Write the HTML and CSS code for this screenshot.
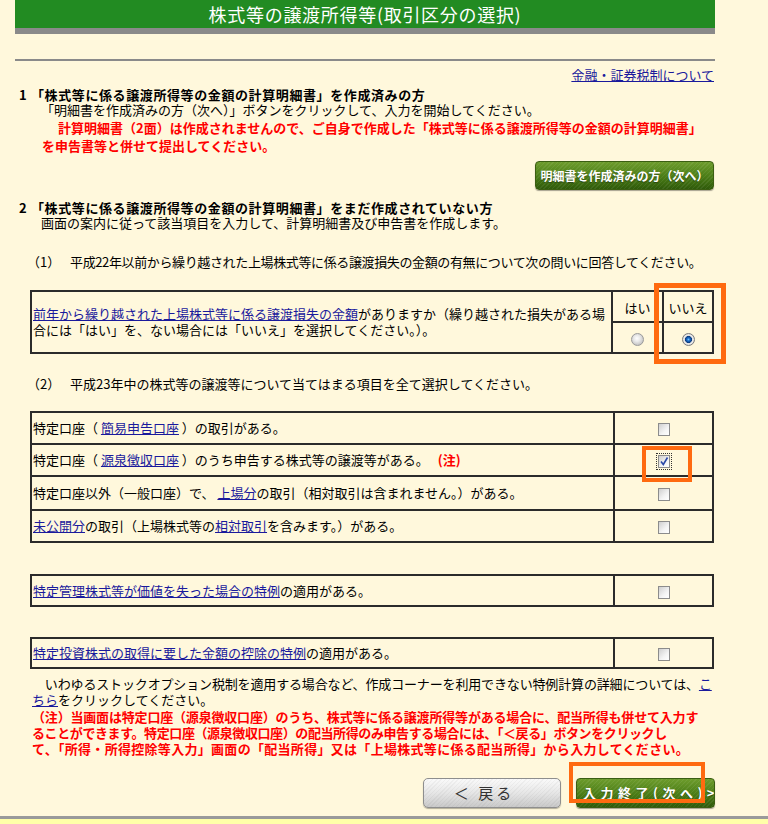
FILE: index.html
```html
<!DOCTYPE html>
<html lang="ja">
<head>
<meta charset="utf-8">
<title>株式等の譲渡所得等(取引区分の選択)</title>
<link rel="stylesheet" href="styles.css">
</head>
<body>
<div class="page">
  <div class="titlebar"><h1>株式等の譲渡所得等(取引区分の選択)</h1></div>
  <hr class="rule">
  <div class="toplink"><a href="#">金融・証券税制について</a></div>

  <h2 class="head"><span class="num">1</span>「株式等に係る譲渡所得等の金額の計算明細書」を作成済みの方</h2>
  <p class="desc">「明細書を作成済みの方（次へ）」ボタンをクリックして、入力を開始してください。</p>
  <p class="warn">計算明細書（2面）は作成されませんので、ご自身で作成した「株式等に係る譲渡所得等の金額の計算明細書」<br>を申告書等と併せて提出してください。</p>
  <div class="btnrow1"><span class="btn-green btn-sm">明細書を作成済みの方（次へ）</span></div>

  <h2 class="head head2"><span class="num">2</span>「株式等に係る譲渡所得等の金額の計算明細書」をまだ作成されていない方</h2>
  <p class="desc">画面の案内に従って該当項目を入力して、計算明細書及び申告書を作成します。</p>

  <p class="q q1"><span class="qn">（1）</span>平成22年以前から繰り越された上場株式等に係る譲渡損失の金額の有無について次の問いに回答してください。</p>
  <table class="tbl t1">
    <tr>
      <td class="txt" rowspan="2"><a href="#">前年から繰り越された上場株式等に係る譲渡損失の金額</a>がありますか（繰り越された損失がある場<br>合には「はい」を、ない場合には「いいえ」を選択してください。）。</td>
      <td class="yn c-yes">はい</td>
      <td class="yn c-no">いいえ<span class="mark mark-no"></span></td>
    </tr>
    <tr>
      <td class="rad c-yes"><span class="radio"></span></td>
      <td class="rad c-no"><span class="radio on"></span></td>
    </tr>
  </table>

  <p class="q q2"><span class="qn">（2）</span>平成23年中の株式等の譲渡等について当てはまる項目を全て選択してください。</p>
  <table class="tbl t2">
    <tr class="r1">
      <td class="txt">特定口座（ <a href="#">簡易申告口座</a> ）の取引がある。</td>
      <td class="chk"><span class="cb"></span></td>
    </tr>
    <tr class="r2">
      <td class="txt">特定口座（ <a href="#">源泉徴収口座</a> ）のうち申告する株式等の譲渡等がある。 <span class="note">(注)</span></td>
      <td class="chk"><span class="cb on"><svg viewBox="0 0 12 13" width="12" height="13"><path d="M3 6.5 L5.3 9.5 L9.5 2.5" fill="none" stroke="#2b49a8" stroke-width="1.6"/></svg><span class="mark mark-cb"></span></span></td>
    </tr>
    <tr class="r3">
      <td class="txt">特定口座以外（一般口座）で、 <a href="#">上場分</a>の取引（相対取引は含まれません。）がある。</td>
      <td class="chk"><span class="cb"></span></td>
    </tr>
    <tr class="r4">
      <td class="txt"><a href="#">未公開分</a>の取引（上場株式等の<a href="#">相対取引</a>を含みます。）がある。</td>
      <td class="chk"><span class="cb"></span></td>
    </tr>
  </table>

  <table class="tbl t3">
    <tr>
      <td class="txt"><a href="#">特定管理株式等が価値を失った場合の特例</a>の適用がある。</td>
      <td class="chk"><span class="cb"></span></td>
    </tr>
  </table>

  <table class="tbl t4">
    <tr>
      <td class="txt"><a href="#">特定投資株式の取得に要した金額の控除の特例</a>の適用がある。</td>
      <td class="chk"><span class="cb"></span></td>
    </tr>
  </table>

  <p class="info"><span class="ln ln1">　いわゆるストックオプション税制を適用する場合など、作成コーナーを利用できない特例計算の詳細については、<a href="#">こ</a></span><span class="ln"><a href="#">ちら</a>をクリックしてください。</span></p>
  <p class="caution"><span class="ln c1">（注）当画面は特定口座（源泉徴収口座）のうち、株式等に係る譲渡所得等がある場合に、配当所得も併せて入力す</span><span class="ln c2">ることができます。特定口座（源泉徴収口座）の配当所得のみ申告する場合には、「＜戻る」ボタンをクリックし</span><span class="ln c3">て、「所得・所得控除等入力」画面の「配当所得」又は「上場株式等に係る配当所得」から入力してください。</span></p>

  <div class="navrow">
    <span class="btn-gray">＜ 戻る</span>
    <span class="btn-next-wrap"><span class="btn-green btn-next">入力終了(次へ)&gt;</span><span class="mark mark-next"></span></span>
  </div>
</div>
<div class="footer"></div>
</body>
</html>
```
FILE: styles.css
```css
* { box-sizing: border-box; }
html, body { margin: 0; padding: 0; }
body {
  background: #fff8dc;
  font-family: "Noto Sans CJK JP", "Noto Sans", sans-serif;
  font-size: 13px;
  line-height: 16px;
  color: #000;
  overflow: hidden;
}
a { color: #1a1a9c; text-decoration: underline; }
p { margin: 0; }

.page { width: 700px; margin-left: 15px; }

.titlebar {
  height: 34px;
  background: #228b22;
  border-bottom: 6px solid #8a8a8a;
}
.titlebar h1 {
  margin: 0;
  font-size: 18px;
  font-weight: normal;
  letter-spacing: 0.7px;
  color: #fff;
  text-align: center;
  line-height: 28px;
}
.rule { margin: 25px 0 0; height: 2px; background: #8a8a8a; border: 0; }

.toplink { text-align: right; margin-top: 6px; padding-right: 1px; }

.head {
  margin: 4px 0 0;
  font-size: 13px;
  font-weight: bold;
  line-height: 15px;
  padding-left: 4px;
  letter-spacing: 0.6px;
  white-space: nowrap;
}
.head .num { display: inline-block; width: 12px; letter-spacing: 0; }
.head2 { margin-top: 10px; }
.desc { padding-left: 26px; line-height: 15px; }
.warn {
  margin-top: 2px;
  padding-left: 27px;
  text-indent: 16px;
  color: #ff0000;
  font-weight: bold;
  line-height: 18px;
  white-space: nowrap;
}

.btn-green {
  display: inline-block;
  color: #fff;
  font-weight: bold;
  border: 1px solid #3b5e12;
  border-radius: 4px;
  background:
    repeating-linear-gradient(135deg, rgba(255,255,255,0.07) 0 1px, rgba(255,255,255,0) 1px 3px),
    linear-gradient(#6d9c2c, #4a7c16 55%, #2f5a0a);
  box-shadow: 0 1px 1px rgba(0,0,0,0.35);
  text-shadow: 0 1px 1px rgba(0,0,0,0.4);
  white-space: nowrap;
}
.btnrow1 { margin-top: 6px; text-align: right; padding-right: 1px; height: 29px; }
.btn-sm {
  width: 179px;
  height: 29px;
  font-size: 12px;
  line-height: 27px;
  text-align: center;
}

.q { padding-left: 12px; white-space: nowrap; }
.q .qn { display: inline-block; width: 43px; letter-spacing: 0; }
.q1 { margin-top: 24px; letter-spacing: -0.37px; }
.q2 { margin-top: 22px; }

.tbl {
  margin-left: 15px;
  width: 684px;
  border: 1px solid #2b2b2b;
  border-spacing: 0;
  border-collapse: separate;
}
.tbl td {
  box-sizing: content-box;
  border: 1px solid #2b2b2b;
  padding: 0;
  vertical-align: middle;
}
.tbl td.txt { padding-left: 1px; }
.t1 { margin-top: 20px; }
.t1 td { height: 29px; }
.t1 td.txt { width: 578px; }
.t1 td.c-yes { width: 49px; text-align: center; }
.t1 td.c-no { width: 48px; text-align: center; position: relative; }
.t1 td.yn { padding-top: 2px; height: 27px; }

.t2 { margin-top: 19px; }
.t2 td.txt { width: 580px; }
.t2 td.chk { width: 97px; text-align: center; }
.t2 .r1 td { height: 30px; }
.t2 .r2 td { height: 30px; }
.t2 .r3 td { height: 32px; }
.t2 .r4 td { height: 30px; }
.t3 { margin-top: 31px; }
.t3 td { height: 29px; }
.t4 { margin-top: 30px; }
.t4 td { height: 28px; }
.t3 td.txt, .t4 td.txt { width: 580px; }
.t3 td.chk, .t4 td.chk { width: 97px; text-align: center; }

.note { color: #ff0000; font-weight: bold; margin-left: 6px; }

.radio {
  display: inline-block;
  width: 13px;
  height: 13px;
  border-radius: 50%;
  border: 1px solid #9a9a9a;
  background: radial-gradient(circle at 45% 40%, #ffffff 0, #e9e9e9 35%, #c4c4c4 75%, #b0b0b0 100%);
  vertical-align: middle;
  margin-top: 1px;
}
.radio.on {
  border-color: #7c7c7c;
  background: radial-gradient(circle at 50% 50%, #6cc0ff 0, #1a6cc8 1.5px, #0b3c80 3.2px, #d8d8d8 3.8px, #f2f2f2 4.6px, #b8b8b8 6.5px);
}

.cb {
  display: inline-block;
  position: relative;
  width: 12px;
  height: 13px;
  border: 1px solid #8c8c8c;
  background: linear-gradient(135deg, #cfcfcf 0%, #f4f4f4 60%, #ffffff 100%);
  vertical-align: middle;
  margin-top: 1px;
}
.cb svg { position: absolute; left: -1px; top: -1px; }
.cb.on { outline: 1px dotted #333; outline-offset: 1px; }

.mark {
  position: absolute;
  border: 5px solid #ff6a10;
  pointer-events: none;
}
.mark-no { left: -10px; top: -9px; width: 72px; height: 81px; }
.mark-cb { left: -17px; top: -10px; width: 50px; height: 36px; border-width: 4px; }

.info { margin-top: 7px; padding-left: 17px; }
.ln { display: block; white-space: nowrap; }
.info .ln1 { letter-spacing: -0.15px; }
.caution {
  margin-top: 1px;
  padding-left: 17px;
  color: #ff0000;
  font-weight: bold;
  line-height: 16px;
}
.caution .c1 { letter-spacing: -0.18px; }
.caution .c2 { letter-spacing: -0.4px; }
.caution .c3 { letter-spacing: 0.3px; }

.navrow {
  margin-top: 21px;
  height: 30px;
  display: flex;
  justify-content: flex-end;
  gap: 15px;
}
.btn-gray {
  display: inline-block;
  width: 138px;
  height: 30px;
  border: 1px solid #8e8e8e;
  border-radius: 5px;
  background:
    repeating-linear-gradient(135deg, rgba(0,0,0,0.035) 0 1px, rgba(0,0,0,0) 1px 3px),
    linear-gradient(#fafafa, #e6e6e6 50%, #c9c9c9);
  box-shadow: 0 1px 1px rgba(0,0,0,0.3);
  color: #333;
  font-size: 15px;
  line-height: 28px;
  text-align: center;
  letter-spacing: 3px;
  padding-right: 16px;
}
.btn-next-wrap { position: relative; display: inline-block; width: 139px; height: 30px; }
.btn-next {
  width: 139px;
  height: 30px;
  overflow: hidden;
  font-size: 13px;
  line-height: 28px;
  letter-spacing: 4.5px;
  padding-left: 6px;
  text-align: left;
}
.mark-next { left: -7px; top: -16px; width: 136px; height: 41px; border-width: 4px; }

.footer {
  margin-top: 8px;
  border-top: 3px solid #9a9a9a;
  background: #ffffa8;
  height: 40px;
}
```
